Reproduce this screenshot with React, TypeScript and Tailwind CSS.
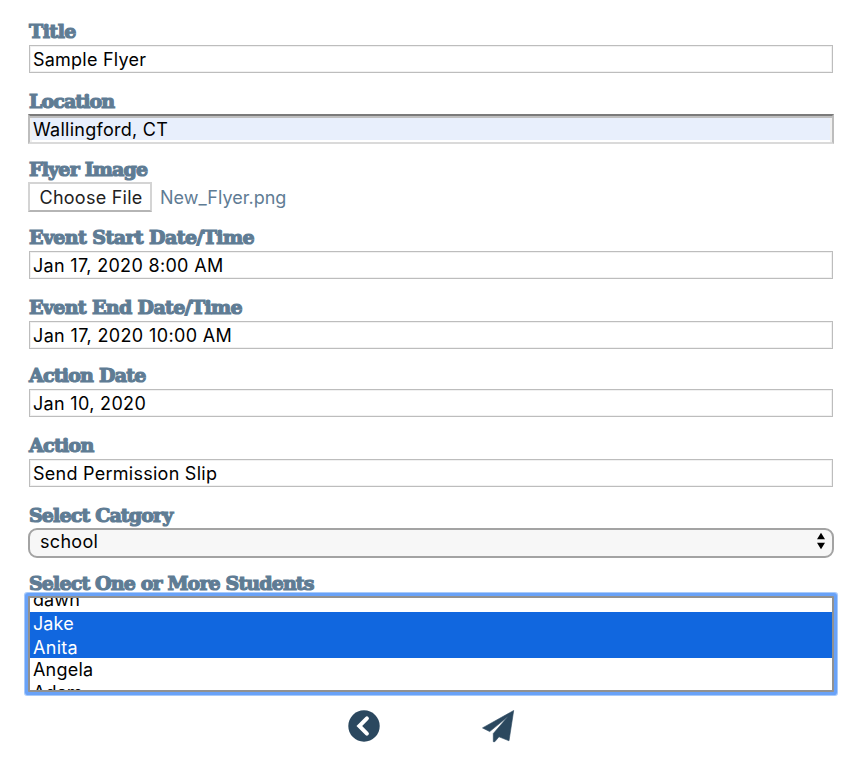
import type { ReactNode } from "react";

const label =
  "block h-[25px] whitespace-nowrap pl-px font-['DejaVu_Serif',serif] text-[19px] leading-6 font-bold text-[#5f7c94] [-webkit-text-stroke:1.2px_#5f7c94]";

function Field({ name, tracking, gap, children }: { name: string; tracking: string; gap: string; children: ReactNode }) {
  return (
    <div className={gap}>
      <label className={label}>
        <span className={tracking}>{name}</span>
      </label>
      {children}
    </div>
  );
}

function TextBox({ value, tracking }: { value: string; tracking: string }) {
  return (
    <div className="h-[30px] p-px">
      <div className="h-7 border border-[#bdbdbd] bg-white pl-[3px] leading-[27px] whitespace-nowrap shadow-[inset_0_0_0_1px_#f1f1f1]">
        <span className={tracking}>{value}</span>
      </div>
    </div>
  );
}

export default function App() {
  return (
    <form className="h-[782px] w-[854px] overflow-hidden bg-white pt-[19px] pr-5 pl-7 font-[Inter,sans-serif] text-[18px] text-black">
      <Field name="Title" tracking="tracking-[-0.5px]" gap="mb-[15px]">
        <TextBox value="Sample Flyer" tracking="tracking-[0.23px]" />
      </Field>
      <Field name="Location" tracking="tracking-[-0.9px]" gap="mb-[13px]">
        <div className="h-[30px] border-2 border-t-[#7b7b7b] border-r-[#bdbdbd] border-b-[#dadada] border-l-[#bdbdbd] bg-[#e8effc] pl-[3px] leading-[27px] whitespace-nowrap shadow-[inset_0_2px_0_#bfbfbf,inset_2px_0_0_#f0f0f0,inset_-2px_0_0_#f0f0f0,inset_0_-2px_0_#fff]">
          <span className="tracking-[0.27px]">Wallingford, CT</span>
        </div>
      </Field>
      <Field name="Flyer Image" tracking="tracking-[-0.8px]" gap="mb-[13px]">
        <div className="flex h-[30px] leading-[27px] whitespace-nowrap">
          <button type="button" className="h-[30px] w-[124px] border-2 border-[#d4d4d4] border-b-[#b5b5b5] bg-white pl-[9.5px] text-left leading-[28px] text-[#222]">
            <span className="tracking-[0.25px]">Choose File</span>
          </button>
          <span className="pt-0.5 pl-[8px] text-[#5f7c94]">
            <span className="tracking-[0.02px]">New_Flyer.png</span>
          </span>
        </div>
      </Field>
      <Field name="Event Start Date/Time" tracking="tracking-[-0.58px]" gap="mb-[15px]">
        <TextBox value="Jan 17, 2020 8:00 AM" tracking="tracking-[0.32px]" />
      </Field>
      <Field name="Event End Date/Time" tracking="tracking-[-0.64px]" gap="mb-[13px]">
        <TextBox value="Jan 17, 2020 10:00 AM" tracking="tracking-[0.36px]" />
      </Field>
      <Field name="Action Date" tracking="tracking-[-0.78px]" gap="mb-[15px]">
        <TextBox value="Jan 10, 2020" tracking="tracking-[0.32px]" />
      </Field>
      <Field name="Action" tracking="tracking-[-0.68px]" gap="mb-[15px]">
        <TextBox value="Send Permission Slip" tracking="tracking-[0.26px]" />
      </Field>
      <Field name="Select Catgory" tracking="tracking-[-0.85px]" gap="mb-[13px]">
        <div className="flex h-[30px] items-center justify-between rounded-[9px] border-2 border-[#a3a3a3] bg-[#f7f7f7] pr-[6px] pl-[10px]">
          <span className="pb-1 tracking-[0.3px]">school</span>
          <svg className="mb-1" width="10" height="18" viewBox="0 0 10 18">
            <path d="M5 .8 9 7.300H1ZM5 17.300 1 10.800H9Z" fill="#000" />
          </svg>
        </div>
      </Field>
      <Field name="Select One or More Students" tracking="tracking-[-0.86px]" gap="mb-[18px]">
        <div className="relative h-[96px] overflow-hidden rounded-[1px] border-2 border-[#919191] bg-white shadow-[0_0_0_3px_#69a2f8,0_0_0_4px_#a8cafa]">
          <div className="-mt-[9px] h-[23px] pl-[3px] leading-[22px] tracking-[0.1px]">dawn</div>
          <div className="h-[23px] bg-[#1167df] pl-[3px] leading-[24px] tracking-[0.1px] text-white">Jake</div>
          <div className="h-[23px] bg-[#1167df] pl-[3px] leading-[25px] tracking-[0.3px] text-white">Anita</div>
          <div className="h-[23px] pl-[3px] leading-[23px] tracking-[0.2px]">Angela</div>
          <div className="h-[23px] pl-[3px] leading-[23px] tracking-[0.1px]">Adam</div>
        </div>
      </Field>
      <div className="flex gap-[102px] pl-80">
        <svg width="32" height="32" viewBox="0 0 32 32" fill="none">
          <circle cx="16" cy="16" r="15.700" fill="#2b485f" />
          <path d="M18.900 8.400 11.300 16l7.600 7.600" stroke="#fff" strokeWidth="4" strokeLinecap="round" />
        </svg>
        <svg width="33" height="33" viewBox="0 0 33 33" fill="#2b485f" stroke="#2b485f" strokeWidth=".6" strokeLinejoin="round">
          <path d="M31.700.5.500 17.900l7.200 3.700L26 6.600 11.300 23.500V31.700h1.500L17 26.800l10 4Z" />
        </svg>
      </div>
    </form>
  );
}
